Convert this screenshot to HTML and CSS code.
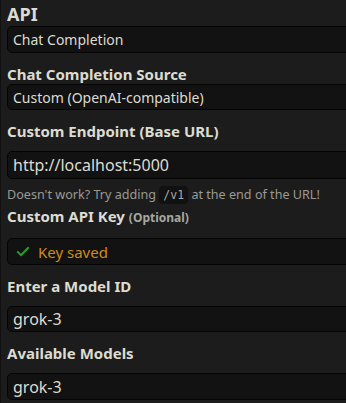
FILE: index.html
```html
<!DOCTYPE html>
<html>
<head>
<meta charset="utf-8">
<link rel="stylesheet" href="styles.css">
</head>
<body>
<div class="panel">
  <h3 class="title">API</h3>
  <div class="field">Chat Completion</div>

  <h4 class="label tight">Chat Completion Source</h4>
  <div class="field short">Custom (OpenAI-compatible)</div>

  <h4 class="label">Custom Endpoint (Base URL)</h4>
  <div class="field big tall">http://localhost:5000</div>
  <div class="hint">Doesn't work? Try adding <code>/v1</code> at the end of the URL!</div>

  <h4 class="label after-hint">Custom API Key <span class="opt">(Optional)</span></h4>
  <div class="field saved">
    <svg class="check" width="14" height="11" viewBox="0 0 14 11"><path d="M1.2 5.4 L5 9.2 L12.8 1.2" fill="none" stroke="#21a32b" stroke-width="2"/></svg>
    <span>Key saved</span>
  </div>

  <h4 class="label">Enter a Model ID</h4>
  <div class="field big short">grok-3</div>

  <h4 class="label">Available Models</h4>
  <div class="field big">grok-3</div>
</div>
</body>
</html>
```

FILE: styles.css
```css
html, body {
  margin: 0;
  padding: 0;
  background: #1c1c1c;
  height: 100%;
}
body {
  font-family: "Noto Sans", sans-serif;
  color: #dcdcd2;
  overflow: hidden;
}
.panel {
  border-left: 1px solid #111;
  padding: 2px 0 0 6px;
  height: 100%;
  box-sizing: border-box;
}
.title {
  margin: 0;
  font-size: 18px;
  font-weight: 700;
  line-height: 24px;
}
.label {
  margin: 11px 0 10px;
  font-size: 15px;
  font-weight: 700;
  line-height: 20px;
}
.label.tight {
  margin: 11px 0 0;
}
.label.after-hint {
  margin-top: 1px;
}
.opt {
  font-size: 12px;
  color: #a8a8a0;
}
.field {
  box-sizing: border-box;
  height: 27px;
  margin-right: -10px;
  background: #121212;
  border: 1px solid #050505;
  border-radius: 5px;
  padding: 0 5px;
  font-size: 14px;
  display: flex;
  align-items: center;
}
.field.short {
  height: 26px;
}
.field.tall {
  height: 28px;
}
.field.big {
  font-size: 16px;
}
.hint {
  margin-top: 6px;
  font-size: 12.6px;
  color: #9a9a94;
  line-height: 20px;
  height: 20px;
}
code {
  font-family: "DejaVu Sans Mono", monospace;
  font-size: 11.5px;
  line-height: 1;
  background: #111;
  border-radius: 4px;
  padding: 2px 4px;
  color: #aaa;
}
.saved {
  color: #cf8a1e;
  font-size: 15px;
  padding-left: 8px;
}
.check {
  margin-right: 8px;
}
```
